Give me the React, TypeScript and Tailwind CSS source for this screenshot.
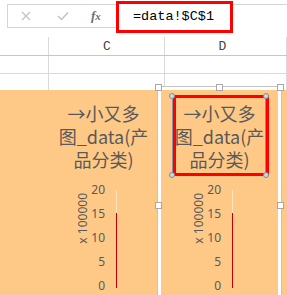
import React from "react";

const titleFont = { fontFamily: '"Noto Sans CJK SC", sans-serif' };

const Chart = ({ selected }: { selected?: boolean }) => {
  return (
    <div className="relative h-full pt-[12px]">
      <div className="text-center text-[18px] leading-[23px] text-[#595959]" style={titleFont}>
        →小又多
        <br />
        图_data(产
        <br />
        品分类)
      </div>

      <div className="mt-[12px] flex h-[110px] pl-[31px] font-['Noto_Sans',sans-serif] text-[12px] leading-[14px] text-[#595959]">
        <div className="w-[14px] pt-[10px]">
          <span className="block rotate-180 [writing-mode:vertical-rl]">x 100000</span>
        </div>
        <div className="flex w-[15px] flex-col justify-between text-right">
          <span>20</span>
          <span>15</span>
          <span>10</span>
          <span>5</span>
          <span>0</span>
        </div>
        <div className="ml-[11px] mt-[7px] flex w-px flex-col">
          <div className="h-[23px] bg-[#fde3bb]" />
          <div className="h-[75px] bg-[#c00000]" />
        </div>
      </div>

      {selected && (
        <>
          {/* title selection */}
          <div className="absolute left-[11px] top-[6px] h-[79px] w-[94px] border border-[#8393a3]" />
          <div className="absolute left-[12px] top-[5px] h-[81px] w-[96px] border-[3px] border-[#ff0000]" />
          <div className="absolute left-[8px] top-[3px] h-[6px] w-[6px] rounded-full border border-[#7d8c9b] bg-[#cfd8e2]" />
          <div className="absolute left-[102px] top-[3px] h-[6px] w-[6px] rounded-full border border-[#7d8c9b] bg-[#cfd8e2]" />
          <div className="absolute left-[8px] top-[82px] h-[6px] w-[6px] rounded-full border border-[#7d8c9b] bg-[#cfd8e2]" />
          <div className="absolute left-[102px] top-[82px] h-[6px] w-[6px] rounded-full border border-[#7d8c9b] bg-[#cfd8e2]" />
        </>
      )}
    </div>
  );
};

const Handle = ({ className }: { className: string }) => (
  <div className={`absolute h-[7px] w-[7px] border border-[#a8a8a8] bg-white ${className}`} />
);

export default function App() {
  return (
    <div className="h-[295px] w-[287px] overflow-hidden bg-white">
      {/* formula bar */}
      <div className="flex h-[37px] items-start">
        <div className="ml-[7px] mt-[4px] flex h-[24px] w-[109px] items-center border border-r-0 border-[#d5d5d5]">
          <svg className="ml-[13px]" width="10" height="10" viewBox="0 0 10 10">
            <path d="M1 1L9 9M9 1L1 9" stroke="#c3c3c3" strokeWidth="1.3" fill="none" />
          </svg>
          <svg className="ml-[26px]" width="12" height="10" viewBox="0 0 12 10">
            <path d="M1 5L4.5 8.5L11 1.5" stroke="#c3c3c3" strokeWidth="1.5" fill="none" />
          </svg>
          <span className="ml-[22px] font-['Liberation_Serif',serif] text-[13px] font-bold italic text-[#6e6e6e]">
            f<span className="text-[11px]">x</span>
          </span>
        </div>
        <div className="mt-[1px] flex h-[32px] w-[117px] items-center border-[3px] border-[#ff0000] pl-[14px] font-['Liberation_Mono',monospace] text-[13.5px] text-black">
          =data!$C$1
        </div>
        <div className="mt-[4px] flex-1 border-t border-[#d5d5d5]" />
      </div>

      {/* column headers */}
      <div className="flex h-[19px] border-b border-[#c6c6c6] font-['Liberation_Mono',monospace] text-[13px] leading-[14px] text-[#444]">
        <div className="w-[49px] border-r border-[#dadada]" />
        <div className="flex w-[116px] items-end justify-center border-r border-[#dadada] pb-[1px] pl-[1px]">C</div>
        <div className="flex w-[122px] items-end justify-center border-r border-[#dadada] pb-[1px] pr-[6px]">D</div>
      </div>

      {/* rows */}
      <div className="flex h-[18px] border-b border-[#dadada]">
        <div className="w-[49px] border-r border-[#dadada]" />
        <div className="w-[116px] border-r border-[#dadada]" />
        <div className="w-[122px] border-r border-[#dadada]" />
      </div>
      <div className="flex h-[16px]">
        <div className="w-[49px] border-r border-[#dadada]" />
        <div className="w-[116px] border-r border-[#dadada]" />
        <div className="w-[122px] border-r border-[#dadada]" />
      </div>

      {/* charts */}
      <div className="flex h-[205px] bg-[#fec987] pl-[41px]">
        <div className="-mt-[4px] w-[125px] border-[4px] border-transparent">
          <Chart />
        </div>
        <div className="relative z-10 -ml-[9px] -mt-[4px] h-[213px] w-[125px] border border-[#c4c4c4] bg-[#fec987]">
          <div className="h-full border-[3px] border-b-0 border-white">
            <Chart selected />
          </div>
          <Handle className="-left-[3px] -top-[3px]" />
          <Handle className="left-[58px] -top-[3px]" />
          <Handle className="-right-[3px] -top-[3px]" />
          <Handle className="-left-[3px] top-[115px]" />
          <Handle className="-right-[3px] top-[115px]" />
        </div>
      </div>
    </div>
  );
}
